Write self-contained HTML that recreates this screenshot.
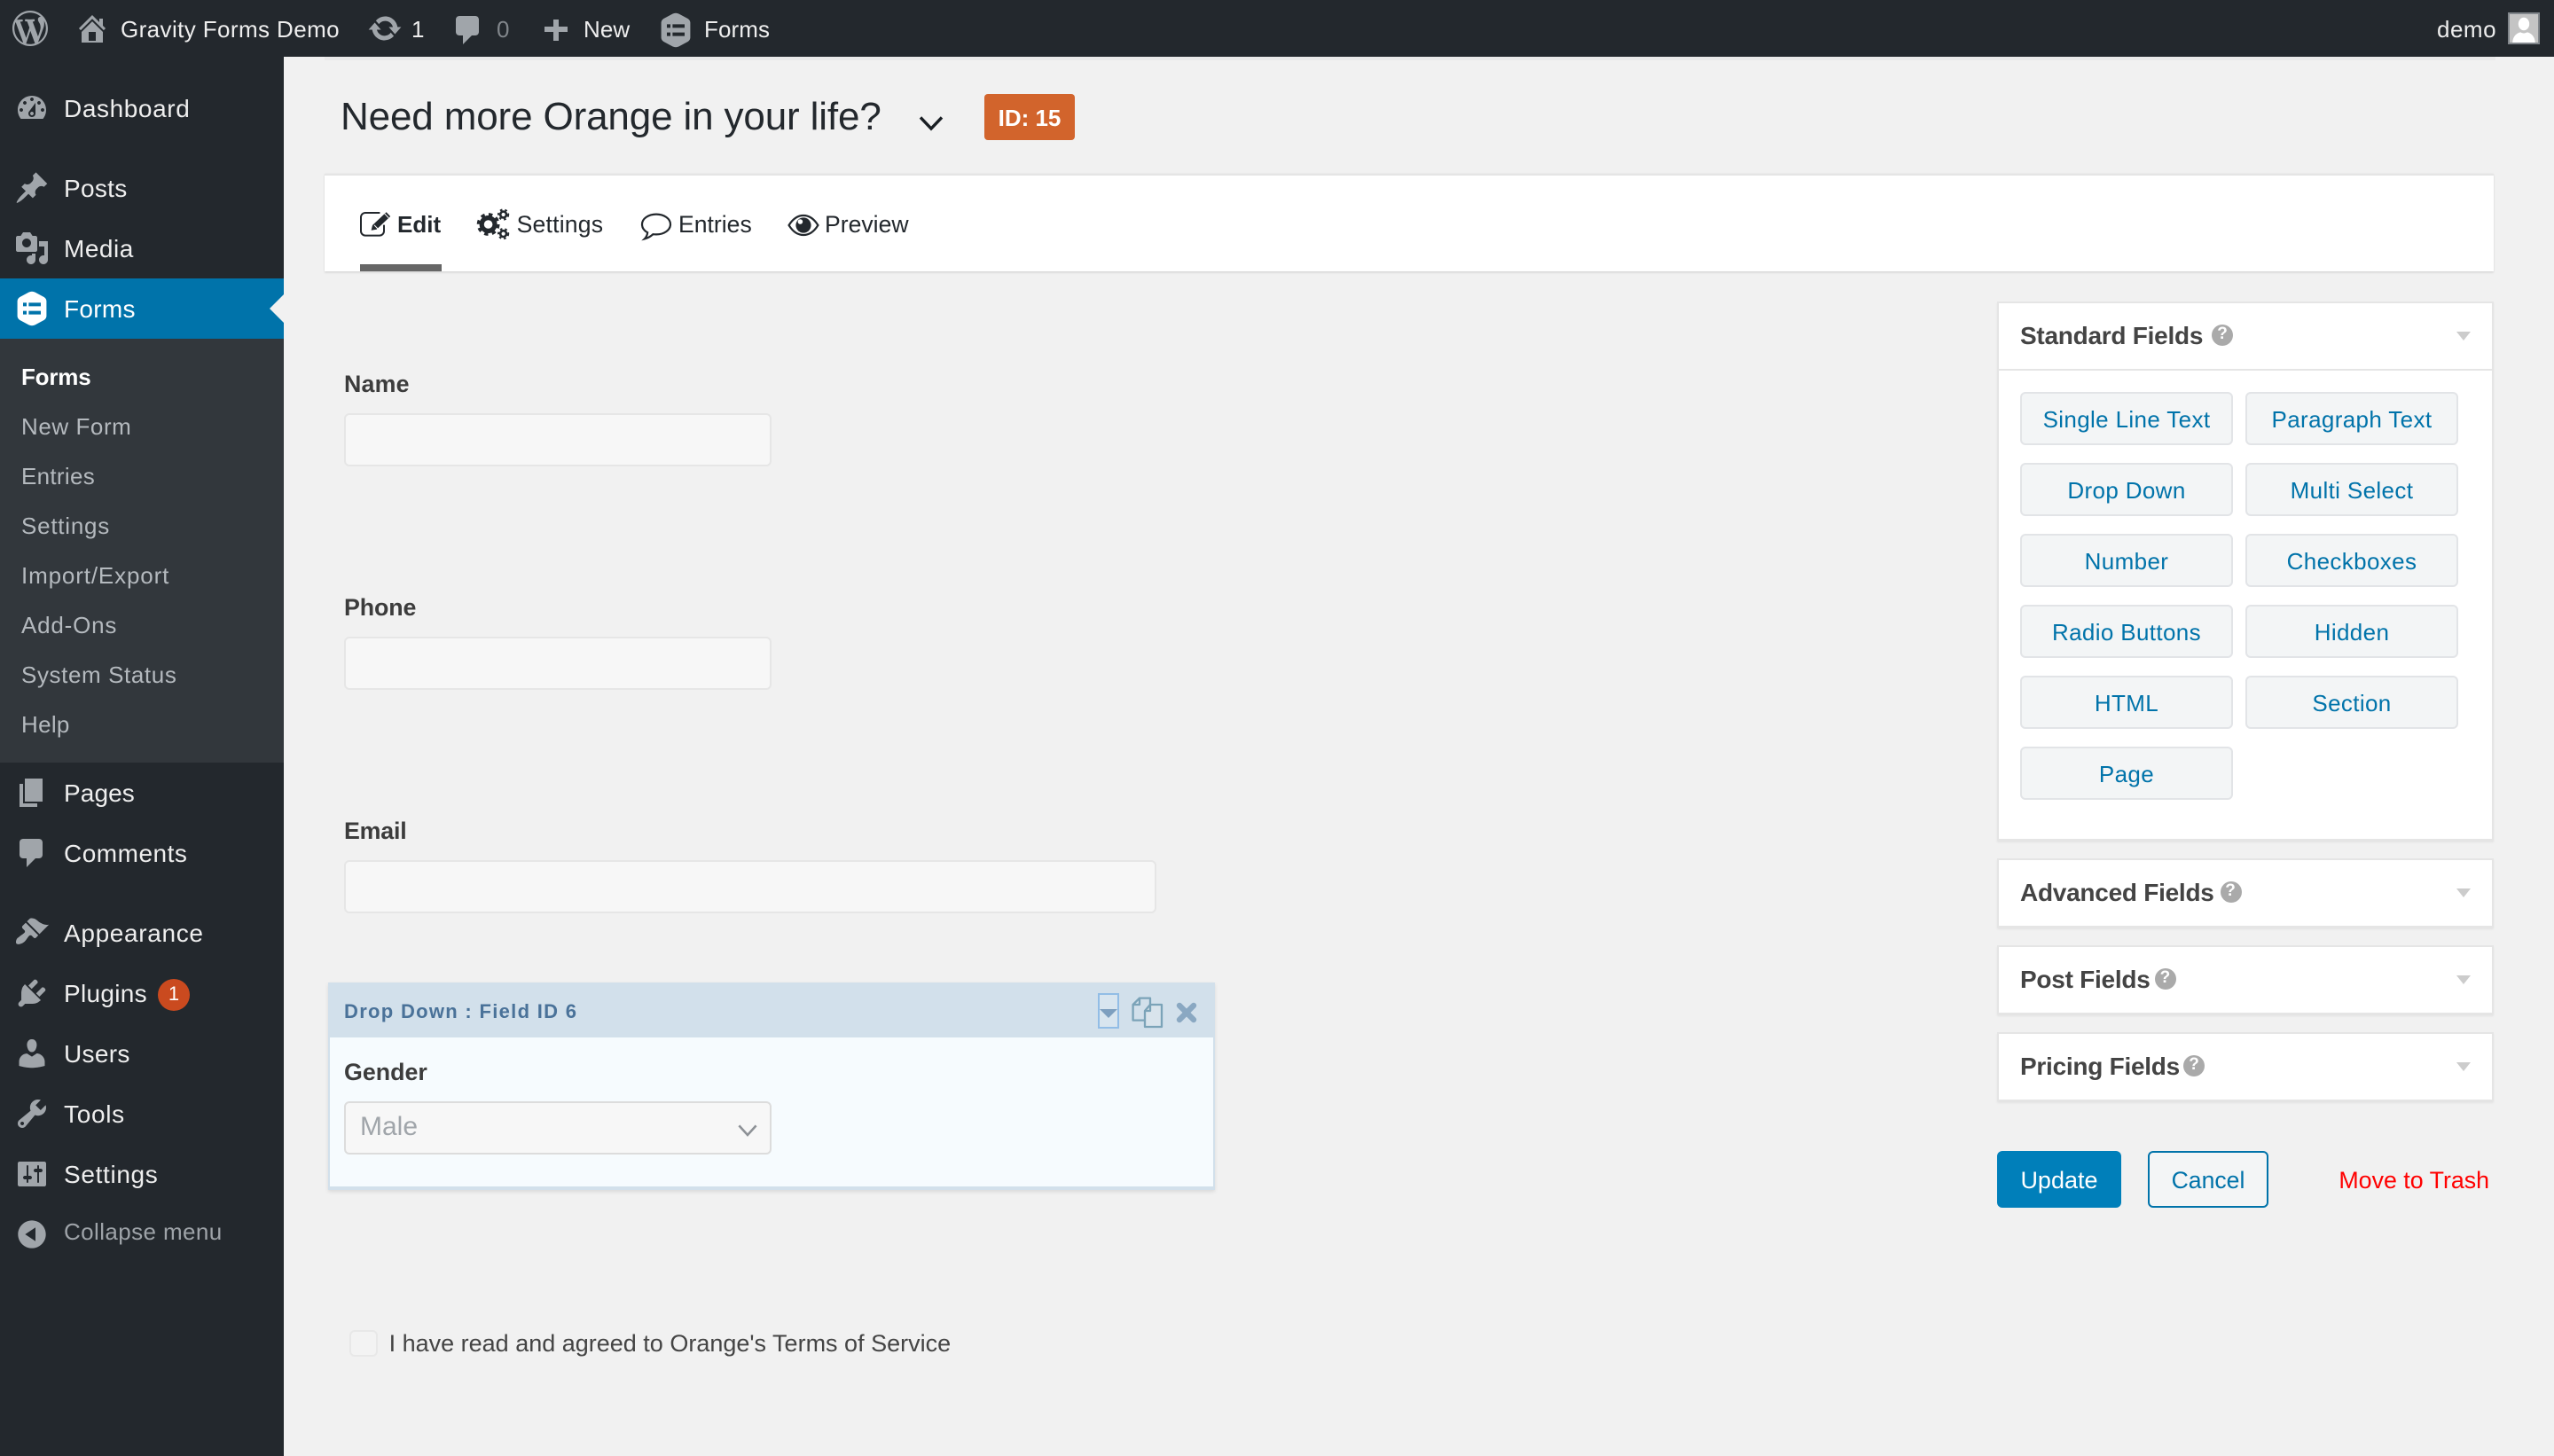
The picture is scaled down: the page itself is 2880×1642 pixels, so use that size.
<!DOCTYPE html>
<html lang="en"><head><meta charset="utf-8"><title>Gravity Forms Demo</title>
<style>
html,body{margin:0;padding:0;width:2880px;height:1642px;overflow:hidden;background:#f1f1f1}
#p{position:absolute;left:0;top:0;width:1440px;height:821px;transform:scale(2);transform-origin:0 0;background:#f1f1f1;overflow:hidden;font-family:"Liberation Sans",Arial,sans-serif;color:#444}
#p div,#p svg,#p a{position:absolute}
.t{white-space:nowrap;line-height:20px;height:20px}
svg{overflow:visible;display:block}
.bar{left:0;top:0;width:1440px;height:32px;background:#23282d}
.bt{color:#eee;font-size:13px}
.side{left:0;top:32px;width:160px;height:789px;background:#23282d}
.m{color:#eee;font-size:14px;letter-spacing:.25px;left:36px}
.s{color:#b4b9be;font-size:13px;letter-spacing:.35px;left:12px}
.ic{width:20px;height:20px;left:8px;fill:#a0a5aa}
.in{background:#f7f7f7;border:1px solid #e6e6e6;border-radius:3px;box-sizing:border-box;left:194px}
.lb{font-weight:bold;font-size:13.4px;color:#3c3c3c;left:194px}
.panel{left:1126px;width:280px;background:#fff;border:1px solid #e5e5e5;box-sizing:border-box;box-shadow:0 1px 1px rgba(0,0,0,.06)}
.pt{font-weight:bold;font-size:14px;letter-spacing:-.13px;color:#444;left:1139px}
.help{width:12px;height:12px;border-radius:50%;background:#aaa;color:#fff;font:bold 9.5px/12px "Liberation Sans",sans-serif;text-align:center}
.tri{width:0;height:0;left:1385px;border-left:4px solid transparent;border-right:4px solid transparent;border-top:5px solid #ccc}
.b{width:120px;height:30px;box-sizing:border-box;background:#f3f5f6;border:1px solid #e2e4e7;border-radius:3px;color:#0073aa;font-size:13px;letter-spacing:.18px;line-height:29px;text-align:center;white-space:nowrap}
.tab{font-size:13.3px;color:#23282d}
</style></head><body><div id="p">

<div class="bar"></div>
<svg style="left:6.5px;top:6px" width="20" height="20" viewBox="0 0 20 20" fill="#a0a5aa"><path d="M20 10c0-5.51-4.49-10-10-10C4.48 0 0 4.49 0 10c0 5.52 4.48 10 10 10 5.51 0 10-4.48 10-10zM7.78 15.37L4.37 6.22c.55-.02 1.17-.08 1.17-.08.5-.06.44-1.13-.06-1.11 0 0-1.45.11-2.37.11-.18 0-.37 0-.58-.01C4.12 2.69 6.87 1.11 10 1.11c2.33 0 4.45.87 6.05 2.34-.68-.11-1.65.39-1.65 1.58 0 .74.45 1.36.9 2.1.35.61.55 1.36.55 2.46 0 1.49-1.4 5-1.4 5l-3.03-8.37c.54-.02.82-.17.82-.17.5-.05.44-1.25-.06-1.22 0 0-1.44.12-2.38.12-.87 0-2.33-.12-2.33-.12-.5-.03-.56 1.2-.06 1.22l.92.08 1.26 3.41zM17.41 10c.24-.64.74-1.87.43-4.25.7 1.29 1.05 2.71 1.05 4.25 0 3.29-1.73 6.24-4.4 7.78.97-2.59 1.94-5.2 2.92-7.78zM6.1 18.09C3.12 16.65 1.11 13.53 1.11 10c0-1.3.23-2.48.72-3.59C3.25 10.3 4.67 14.2 6.1 18.09zm4.03-6.63l2.58 6.98c-.86.29-1.76.45-2.71.45-.79 0-1.57-.11-2.29-.33.81-2.38 1.62-4.74 2.42-7.1z"/></svg>
<svg style="left:42px;top:6.2px" width="20" height="20" viewBox="0 0 20 20" fill="#a0a5aa"><path d="M16 8.5l1.53 1.53-1.06 1.06L10 4.62l-6.47 6.47-1.06-1.06L10 2.5l4 4v-2h2v4zm-6-2.46l6 5.99V18H4v-5.97zM12 17v-5H8v5h4z"/></svg>
<div class="t bt" style="left:68px;top:6.5px;letter-spacing:.2px">Gravity Forms Demo</div>
<svg style="left:206.5px;top:5.7px" width="20" height="20" viewBox="0 0 20 20" fill="#a0a5aa"><path d="M10.2 3.28c3.53 0 6.43 2.61 6.92 6h2.08l-3.5 4-3.5-4h2.32c-.45-1.97-2.21-3.45-4.32-3.45-1.45 0-2.73.71-3.54 1.78L4.95 5.66C6.23 4.2 8.11 3.28 10.2 3.28zm-.4 13.44c-3.52 0-6.43-2.61-6.92-6H.8l3.5-4c1.17 1.33 2.33 2.67 3.5 4H5.48c.45 1.97 2.21 3.45 4.32 3.45 1.45 0 2.73-.71 3.54-1.78l1.71 1.95c-1.28 1.46-3.15 2.38-5.25 2.38z"/></svg>
<div class="t bt" style="left:232px;top:6.5px">1</div>
<svg style="left:253.6px;top:7px" width="20" height="20" viewBox="0 0 20 20" fill="#a0a5aa"><path d="M5 2h9c1.1 0 2 .9 2 2v7c0 1.1-.9 2-2 2h-2l-5 5v-5H5c-1.1 0-2-.9-2-2V4c0-1.1.9-2 2-2z"/></svg>
<div class="t bt" style="left:280px;top:6.5px;color:#81868b">0</div>
<div style="left:312px;top:10.5px;width:3px;height:12.5px;background:#a0a5aa"></div>
<div style="left:307px;top:15.2px;width:13px;height:3px;background:#a0a5aa"></div>
<div class="t bt" style="left:329px;top:6.5px;letter-spacing:.05px">New</div>
<svg style="left:371px;top:7px" width="20" height="20" viewBox="0 0 20 20" fill="#a0a5aa" fill-rule="evenodd"><path d="M8.2.8a4 4 0 0 1 3.6 0l5 2.7a3 3 0 0 1 1.4 2.2v8.6a3 3 0 0 1-1.4 2.2l-5 2.7a4 4 0 0 1-3.6 0l-5-2.7a3 3 0 0 1-1.4-2.2V5.700a3 3 0 0 1 1.4-2.2zM5 6.7h2v2H5zM5 11.3h2v2H5zM8.2 6.7H15v2H8.2zM8.2 11.3H15v2H8.2z"/></svg>
<div class="t bt" style="left:397px;top:6.5px;letter-spacing:.05px">Forms</div>
<div class="t bt" style="left:1374px;top:6.5px;letter-spacing:.25px">demo</div>
<div style="left:1414px;top:7px;width:18px;height:18px;box-sizing:border-box;border:1px solid #82878c;background:#c4c4c4;overflow:hidden">
<svg style="left:0;top:0" width="16" height="16" viewBox="0 0 16 16" fill="#fff"><ellipse cx="8" cy="5.5" rx="3.1" ry="3.6"/><path d="M1.6 16c.2-3.6 2.4-5.4 4.6-5.800 1 .7 2.6.7 3.600 0 2.200.4 4.400 2.200 4.600 5.800z"/></svg></div>
<div style="left:182.5px;top:32px;width:1224px;height:2px;background:#eaeaea"></div>

<div class="side"></div>
<svg class="ic" style="top:51px" viewBox="0 0 20 20" fill-rule="evenodd"><path d="M3.76 16h12.48c1.1-1.37 1.76-3.11 1.76-5 0-4.42-3.58-8-8-8s-8 3.58-8 8c0 1.89.66 3.63 1.76 5zM10 4c.55 0 1 .45 1 1s-.45 1-1 1-1-.45-1-1 .45-1 1-1zM6 6c.55 0 1 .45 1 1s-.45 1-1 1-1-.45-1-1 .45-1 1-1zm8 0c.55 0 1 .45 1 1s-.45 1-1 1-1-.45-1-1 .45-1 1-1zm-5.37 5.55L12 7v6c0 1.1-.9 2-2 2s-2-.9-2-2c0-.57.24-1.08.63-1.45zM4 10c.55 0 1 .45 1 1s-.45 1-1 1-1-.45-1-1 .45-1 1-1zm12 0c.55 0 1 .45 1 1s-.45 1-1 1-1-.45-1-1 .45-1 1-1zm-5 3c0-.55-.45-1-1-1s-1 .45-1 1 .45 1 1 1 1-.45 1-1z"/></svg>
<div class="t m" style="top:50.7px;letter-spacing:.3px">Dashboard</div>
<svg class="ic" style="top:96.3px" viewBox="0 0 20 20"><path d="M10.44 3.02l1.82-1.82 6.36 6.35-1.83 1.82c-1.05-.68-2.48-.57-3.41.36l-.75.75c-.92.93-1.04 2.35-.35 3.41l-1.83 1.82-2.41-2.41-2.8 2.79c-.42.42-3.38 2.71-3.8 2.29s1.86-3.39 2.28-3.81l2.79-2.79L4.1 9.36l1.83-1.82c1.05.69 2.48.57 3.4-.36l.75-.75c.93-.92 1.05-2.35.36-3.41z"/></svg>
<div class="t m" style="top:95.7px;letter-spacing:.15px">Posts</div>
<svg class="ic" style="top:130px" viewBox="0 0 20 20" fill-rule="evenodd"><path d="M13 11V4c0-.55-.45-1-1-1h-1.67L9 1H5L3.67 3H2c-.55 0-1 .45-1 1v7c0 .55.45 1 1 1h10c.55 0 1-.45 1-1zM7 4.5c1.38 0 2.5 1.12 2.5 2.5S8.38 9.5 7 9.5 4.5 8.38 4.5 7 5.62 4.5 7 4.5zM14 6h5v10.5c0 1.38-1.12 2.5-2.5 2.5S14 17.88 14 16.5s1.12-2.5 2.5-2.5c.17 0 .34.02.5.05V9h-3V6zm-4 8.05V13h2v3.5c0 1.38-1.12 2.5-2.5 2.5S7 17.88 7 16.5 8.12 14 9.5 14c.17 0 .34.02.5.05z"/></svg>
<div class="t m" style="top:129.7px">Media</div>

<div style="left:0;top:157px;width:160px;height:34px;background:#0073aa"></div>
<svg style="left:8px;top:164px" width="20" height="20" viewBox="0 0 20 20" fill="#fff" fill-rule="evenodd"><path d="M8.2.8a4 4 0 0 1 3.6 0l5 2.7a3 3 0 0 1 1.4 2.2v8.6a3 3 0 0 1-1.4 2.2l-5 2.7a4 4 0 0 1-3.6 0l-5-2.7a3 3 0 0 1-1.4-2.2V5.7a3 3 0 0 1 1.4-2.2zM5 6.7h2v2H5zM5 11.3h2v2H5zM8.2 6.7H15v2H8.2zM8.2 11.3H15v2H8.2z"/></svg>
<div class="t m" style="top:163.7px;color:#fff;letter-spacing:.15px">Forms</div>
<div style="left:152px;top:166px;width:0;height:0;border-top:8px solid transparent;border-bottom:8px solid transparent;border-right:8px solid #f1f1f1"></div>

<div style="left:0;top:191px;width:160px;height:239px;background:#32373c"></div>
<div class="t s" style="top:202.6px;color:#fff;font-weight:bold;letter-spacing:-.1px">Forms</div>
<div class="t s" style="top:230.8px;letter-spacing:.28px">New Form</div>
<div class="t s" style="top:258.8px;letter-spacing:.15px">Entries</div>
<div class="t s" style="top:287px;letter-spacing:.38px">Settings</div>
<div class="t s" style="top:314.8px;letter-spacing:.43px">Import/Export</div>
<div class="t s" style="top:342.8px;letter-spacing:.4px">Add-Ons</div>
<div class="t s" style="top:370.8px;letter-spacing:.3px">System Status</div>
<div class="t s" style="top:398.8px;letter-spacing:.15px">Help</div>

<svg class="ic" style="top:437px" viewBox="0 0 20 20"><path d="M6 15V2h10v13H6zm-1 1h8v2H3V5h2v11z"/></svg>
<div class="t m" style="top:436.8px;letter-spacing:.05px">Pages</div>
<svg class="ic" style="top:471px" viewBox="0 0 20 20"><path d="M5 2h9c1.1 0 2 .9 2 2v7c0 1.1-.9 2-2 2h-2l-5 5v-5H5c-1.1 0-2-.9-2-2V4c0-1.1.9-2 2-2z"/></svg>
<div class="t m" style="top:470.8px">Comments</div>
<svg class="ic" style="top:516px" viewBox="0 0 20 20"><path d="M14.48 11.06L7.41 3.99l1.5-1.5c.5-.56 2.3-.47 3.51.32 1.21.8 1.43 1.28 2.91 2.1 1.18.64 2.45 1.26 4.45.85zm-.71.71L6.7 4.7 4.93 6.47c-.39.39-.39 1.02 0 1.41l1.06 1.06c.39.39.39 1.03 0 1.42-.6.6-1.43 1.11-2.21 1.69-.35.26-.7.53-1.01.84C1.43 13.23.78 15.82 1.5 16.54s3.3.07 4.64-1.27c.31-.31.58-.66.84-1.01.58-.78 1.09-1.61 1.69-2.21.39-.39 1.03-.39 1.42 0l1.06 1.06c.39.39 1.02.39 1.41 0z" transform="translate(-.2 -.4)"/></svg>
<div class="t m" style="top:515.8px;letter-spacing:.33px">Appearance</div>
<svg class="ic" style="top:550px" viewBox="0 0 20 20"><path d="M13.11 4.36L9.87 7.6 8 5.73l3.24-3.24c.35-.34 1.05-.2 1.56.32.52.51.66 1.21.31 1.55zm-8 1.77l.91-1.12 9.01 9.01-1.19.84c-.71.71-2.63 1.16-3.82 1.16H6.14L4.9 17.26c-.59.59-1.54.59-2.12 0-.59-.58-.59-1.53 0-2.12l1.24-1.24v-3.88c0-1.13.4-3.19 1.09-3.89zm7.26 3.97l3.24-3.24c.34-.35 1.04-.21 1.55.31.52.51.66 1.21.31 1.55l-3.24 3.25z"/></svg>
<div class="t m" style="top:549.8px;letter-spacing:.15px">Plugins</div>
<div style="left:89px;top:552px;width:18px;height:18px;border-radius:50%;background:#ca4a1f;color:#fff;font-size:11px;line-height:18px;text-align:center">1</div>
<svg class="ic" style="top:584px" viewBox="0 0 20 20"><path d="M10 9.25c-2.27 0-2.73-3.44-2.73-3.44C7 4.02 7.82 2 9.97 2c2.16 0 2.98 2.02 2.71 3.81 0 0-.41 3.44-2.68 3.44zm0 2.57L12.72 10c2.39 0 4.52 2.33 4.52 4.53v2.49s-3.65 1.13-7.24 1.13c-3.65 0-7.24-1.13-7.24-1.13v-2.49c0-2.25 1.94-4.48 4.47-4.48z"/></svg>
<div class="t m" style="top:583.8px;letter-spacing:.15px">Users</div>
<svg class="ic" style="top:618px" viewBox="0 0 20 20" fill-rule="evenodd"><path d="M16.68 9.77c-1.34 1.34-3.3 1.67-4.95.99l-5.41 6.52c-.99.99-2.59.99-3.58 0s-.99-2.59 0-3.57l6.52-5.42c-.68-1.65-.35-3.61.99-4.95 1.28-1.28 3.12-1.62 4.72-1.06l-2.89 2.89 2.82 2.82 2.86-2.87c.53 1.58.18 3.39-1.08 4.65zM3.81 16.21c.4.39 1.04.39 1.43 0 .4-.4.4-1.04 0-1.43-.39-.4-1.03-.4-1.43 0-.39.39-.39 1.03 0 1.43z"/></svg>
<div class="t m" style="top:617.8px;letter-spacing:.35px">Tools</div>
<svg class="ic" style="top:652px" viewBox="0 0 20 20" fill-rule="evenodd"><path d="M18 16V4c0-.55-.45-1-1-1H3c-.55 0-1 .45-1 1v12c0 .55.45 1 1 1h14c.55 0 1-.45 1-1zM8 11h1c.55 0 1 .45 1 1s-.45 1-1 1H8v1.5c0 .28-.22.5-.5.5s-.5-.22-.5-.5V13H6c-.55 0-1-.45-1-1s.45-1 1-1h1V5.5c0-.28.22-.5.5-.5s.5.22.5.5V11zm5-2h-1c-.55 0-1-.45-1-1s.45-1 1-1h1V5.5c0-.28.22-.5.5-.5s.5.22.5.5V7h1c.55 0 1 .45 1 1s-.45 1-1 1h-1v5.5c0 .28-.22.5-.5.5s-.5-.22-.5-.5V9z"/></svg>
<div class="t m" style="top:651.8px;letter-spacing:.33px">Settings</div>
<svg class="ic" style="top:686px" viewBox="0 0 20 20" fill-rule="evenodd"><path d="M10 2.16c4.33 0 7.84 3.51 7.84 7.84s-3.51 7.84-7.84 7.84S2.16 14.33 2.16 10 5.71 2.16 10 2.16zm2 11.72V6.12L6.18 9.97z"/></svg>
<div class="t m" style="top:685px;color:#9ea3a8;font-size:13px;letter-spacing:.2px">Collapse menu</div>

<div class="t" style="left:192px;top:56.2px;font-size:22px;letter-spacing:-.07px;color:#23282d">Need more Orange in your life?</div>
<svg style="left:518px;top:64.8px" width="14" height="9" viewBox="0 0 14 9" fill="none" stroke="#191e23" stroke-width="1.7"><path d="M1 1.2L7 7.500l6-6.300"/></svg>
<div style="left:555px;top:53px;width:51px;height:26px;background:#d2642c;border-radius:2px;color:#fff;font-weight:bold;font-size:13px;line-height:27px;text-align:center">ID: 15</div>

<div style="left:182.5px;top:98px;width:1223.500px;height:55px;background:#fff;border-top:1px solid #e5e5e5;box-sizing:border-box;box-shadow:0 1px 1px rgba(0,0,0,.08),0 0 1px rgba(0,0,0,.08)"></div>
<svg style="left:203px;top:118px" width="18" height="16" viewBox="0 0 18 16" fill="none" stroke="#23282d" stroke-width="1"><path d="M11.2 2H3A2.500 2.500 0 0 0 .5 4.500v7.800A2.500 2.500 0 0 0 3 14.800h8a2.500 2.500 0 0 0 2.500-2.500V8.800"/><path d="M6.300 11.900L7 9l7.800-7.400 2.300 2.400-7.800 7.400z" fill="#23282d" stroke="none"/><path d="M8 8.900l2 2.100M13.800 2.400l2.300 2.400" stroke="#fff" stroke-width=".5"/></svg>
<div class="t tab" style="left:224px;top:116.5px;font-weight:bold;font-size:13px">Edit</div>
<svg style="left:269px;top:118px" width="19" height="17" viewBox="0 0 19 17" fill="#23282d"><circle cx="6.300" cy="8.500" r="3.700" fill="none" stroke="#23282d" stroke-width="2.600"/><circle cx="6.300" cy="8.500" r="5.600" fill="none" stroke="#23282d" stroke-width="1.700" stroke-dasharray="2.200 2.200"/><circle cx="14.800" cy="3" r="1.700" fill="none" stroke="#23282d" stroke-width="1.300"/><circle cx="14.800" cy="3" r="2.800" fill="none" stroke="#23282d" stroke-width="1" stroke-dasharray="1.300 1.500"/><circle cx="14.800" cy="13.800" r="1.700" fill="none" stroke="#23282d" stroke-width="1.300"/><circle cx="14.800" cy="13.800" r="2.800" fill="none" stroke="#23282d" stroke-width="1" stroke-dasharray="1.300 1.500"/></svg>
<div class="t tab" style="left:291.3px;top:116.5px;letter-spacing:.1px">Settings</div>
<svg style="left:361px;top:120px" width="18" height="16" viewBox="0 0 18 16" fill="none" stroke="#23282d" stroke-width="1.100"><path d="M9 .8c4.400 0 8 2.500 8 5.700s-3.600 5.700-8 5.700c-.6 0-1.200 0-1.800-.1-1.100 1-2.700 2.100-4.800 2.600.8-.8 1.500-1.900 1.700-3.600C2.200 10.100 1 8.400 1 6.500 1 3.300 4.600.8 9 .8z"/></svg>
<div class="t tab" style="left:382.5px;top:116.5px">Entries</div>
<svg style="left:444px;top:120px" width="18" height="14" viewBox="0 0 18 14" fill="none" stroke="#23282d" stroke-width="1.100"><path d="M.8 7C2.900 3.600 5.700 1.500 9 1.500s6.100 2.100 8.200 5.500c-2.100 3.400-4.900 5.500-8.200 5.500S2.900 10.400.8 7z"/><circle cx="9" cy="7" r="4.300" fill="#23282d" stroke="none"/><circle cx="7.200" cy="5" r="1.400" fill="#fff" stroke="none"/></svg>
<div class="t tab" style="left:465px;top:116.5px">Preview</div>
<div style="left:203px;top:149px;width:46px;height:4px;background:#666"></div>

<div class="t lb" style="top:206.5px;letter-spacing:.1px">Name</div>
<div class="in" style="top:233px;width:240.5px;height:30px"></div>
<div class="t lb" style="top:332.5px;letter-spacing:-.05px">Phone</div>
<div class="in" style="top:359px;width:240.5px;height:30px"></div>
<div class="t lb" style="top:458.5px;letter-spacing:-.1px">Email</div>
<div class="in" style="top:485px;width:458px;height:30px"></div>

<div style="left:185px;top:554px;width:500px;height:116.5px;box-sizing:border-box;background:#f6fbfe;border:1px solid #d2e0eb;border-bottom-width:2px;box-shadow:0 1px 2px rgba(0,0,0,.1)"></div>
<div style="left:185px;top:554px;width:500px;height:31px;background:#d2e0eb"></div>
<div class="t" style="left:194px;top:560.6px;font-weight:bold;font-size:11px;letter-spacing:.65px;color:#4a7299">Drop Down : Field ID 6</div>
<div style="left:619px;top:560px;width:12px;height:20px;box-sizing:border-box;border:1px solid #92bde6;background:#d8e5ef"></div>
<div style="left:620px;top:568.7px;width:0;height:0;border-left:5px solid transparent;border-right:5px solid transparent;border-top:5.5px solid #7d9fbf"></div>
<svg style="left:638px;top:562px" width="18" height="18" viewBox="0 0 18 18" fill="none" stroke="#7ba3b8" stroke-width="1.150" stroke-linejoin="round" stroke-linecap="round"><path d="M7 13.300H.8V4.500L4.500.8H10.500V4.500"/><path d="M4.500 .9V4.500H.9"/><path d="M10.500 4.500H17V17H7.500V8z" fill="#d9e4ec"/><path d="M10.500 4.600V8H7.600"/></svg>
<svg style="left:663px;top:564.5px" width="12" height="12" viewBox="0 0 12 12" fill="none" stroke="#8aa8c2" stroke-width="3.200" stroke-linecap="round"><path d="M2 2l8 8M10 2l-8 8"/></svg>
<div class="t lb" style="top:594.5px">Gender</div>
<div style="left:194px;top:621px;width:241px;height:30px;box-sizing:border-box;background:#f7f7f7;border:1px solid #dcdcdc;border-radius:3px"></div>
<div class="t" style="left:203px;top:625.5px;font-size:15px;color:#a0a5aa">Male</div>
<svg style="left:415.5px;top:634px" width="11" height="7" viewBox="0 0 11 7" fill="none" stroke="#8d9196" stroke-width="1.300"><path d="M.7.700l4.800 5.300L10.300.700"/></svg>

<div style="left:197px;top:750px;width:16px;height:15px;box-sizing:border-box;background:#f3f3f3;border:1px solid #e8e8e8;border-radius:3px"></div>
<div class="t" style="left:219.3px;top:747.5px;font-size:13.5px;color:#444">I have read and agreed to Orange's Terms of Service</div>

<div class="panel" style="top:170px;height:304px"></div>
<div style="left:1126px;top:208px;width:280px;height:1px;background:#e5e5e5"></div>
<div class="t pt" style="top:178.6px">Standard Fields</div>
<div class="help" style="left:1247px;top:183px">?</div>
<div class="tri" style="top:187px"></div>
<div class="b" style="left:1139px;top:221px">Single Line Text</div>
<div class="b" style="left:1266px;top:221px">Paragraph Text</div>
<div class="b" style="left:1139px;top:261px">Drop Down</div>
<div class="b" style="left:1266px;top:261px">Multi Select</div>
<div class="b" style="left:1139px;top:301px">Number</div>
<div class="b" style="left:1266px;top:301px">Checkboxes</div>
<div class="b" style="left:1139px;top:341px">Radio Buttons</div>
<div class="b" style="left:1266px;top:341px">Hidden</div>
<div class="b" style="left:1139px;top:381px">HTML</div>
<div class="b" style="left:1266px;top:381px">Section</div>
<div class="b" style="left:1139px;top:421px">Page</div>

<div class="panel" style="top:484px;height:39px"></div>
<div class="t pt" style="top:492.8px">Advanced Fields</div>
<div class="help" style="left:1251.5px;top:497px">?</div>
<div class="tri" style="top:501px"></div>
<div class="panel" style="top:533px;height:39px"></div>
<div class="t pt" style="top:541.8px">Post Fields</div>
<div class="help" style="left:1214.7px;top:546px">?</div>
<div class="tri" style="top:550px"></div>
<div class="panel" style="top:582px;height:39px"></div>
<div class="t pt" style="top:590.8px">Pricing Fields</div>
<div class="help" style="left:1231px;top:595px">?</div>
<div class="tri" style="top:599px"></div>

<div style="left:1126px;top:649px;width:70px;height:32px;border-radius:3px;background:#007fba;color:#fff;font-size:13.5px;line-height:33px;text-align:center">Update</div>
<div style="left:1211px;top:649px;width:68px;height:32px;box-sizing:border-box;border-radius:3px;background:#f3f5f6;border:1px solid #0073aa;color:#0073aa;font-size:13.3px;line-height:31px;text-align:center">Cancel</div>
<div class="t" style="left:1318.7px;top:655.5px;font-size:13.4px;color:#f00">Move to Trash</div>

</div></body></html>
